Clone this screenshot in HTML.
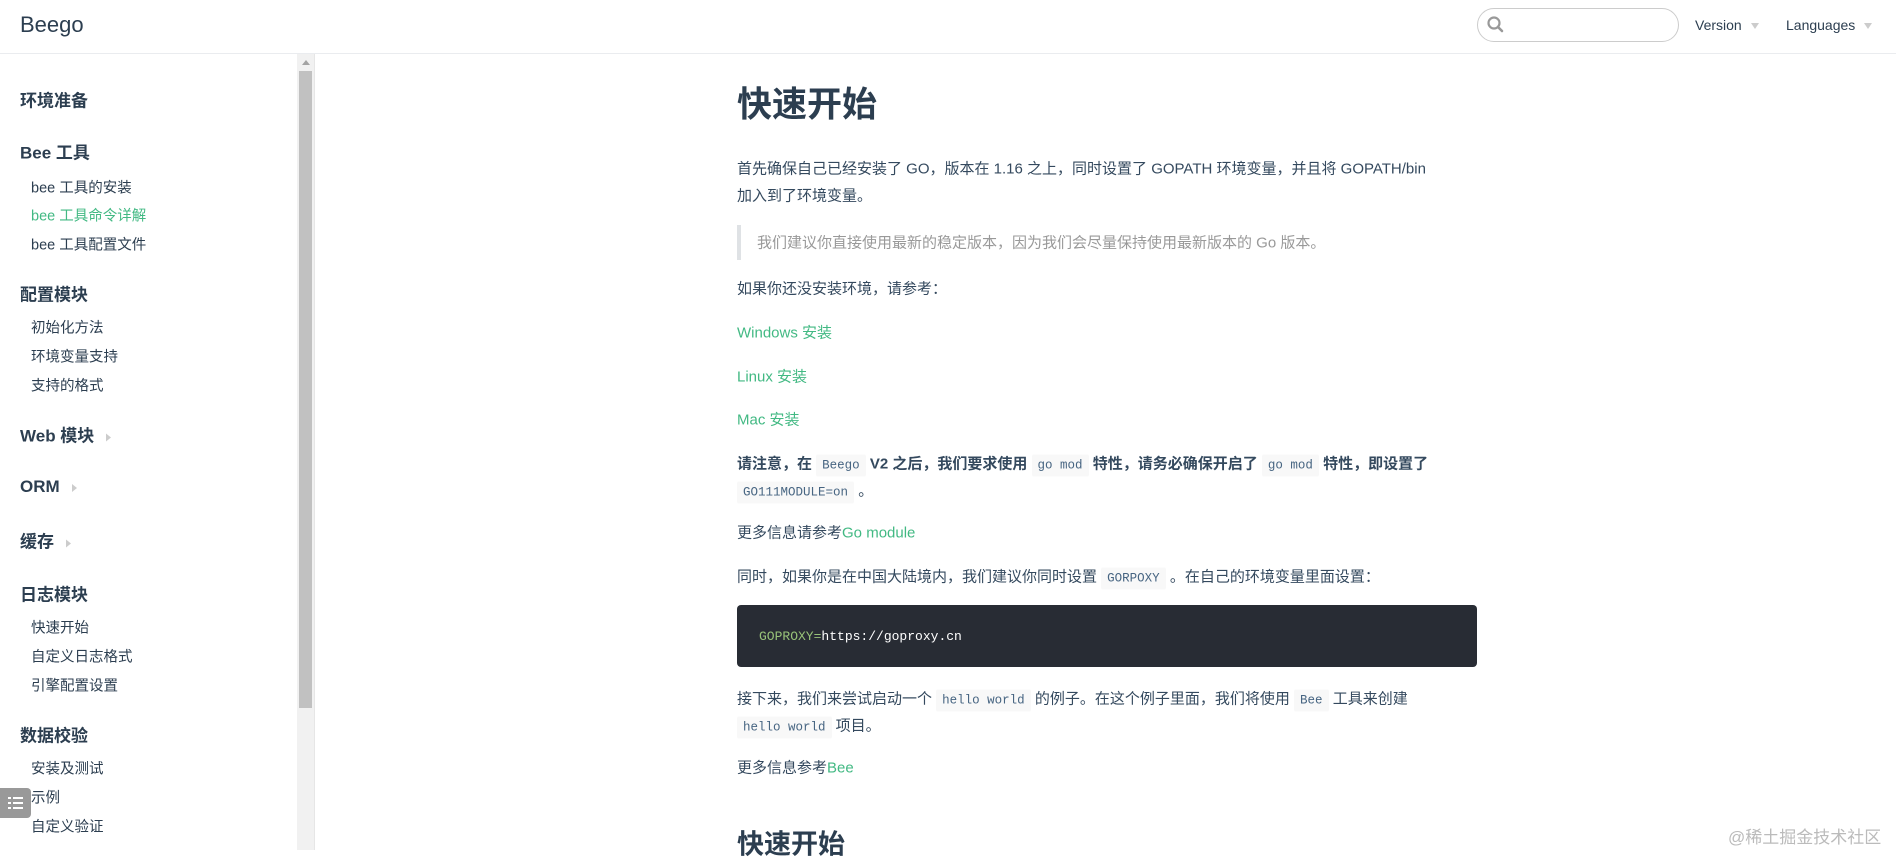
<!DOCTYPE html>
<html><head><meta charset="utf-8"><style>
*{margin:0;padding:0;box-sizing:border-box}
body{width:1896px;height:850px;overflow:hidden;background:#fff;font-family:"Liberation Sans","Noto Sans CJK SC",sans-serif;color:#34495e;position:relative}
.hdr{position:absolute;left:0;top:0;width:1896px;height:54px;border-bottom:1px solid #eaecef;background:#fff}
.logo{position:absolute;left:20px;top:12px;font-size:22px;color:#2c3e50}
.search{position:absolute;left:1477px;top:8px;width:202px;height:34px;border:1px solid #ccc;border-radius:17px}
.nav{position:absolute;top:17px;font-size:14px;color:#2c3e50}
.nav i{display:inline-block;width:0;height:0;border-left:4px solid transparent;border-right:4px solid transparent;border-top:6px solid #ccc;margin-left:9px;vertical-align:middle}
.side{position:absolute;left:0;top:54px;width:297px;height:796px}
.sb{position:absolute;left:297px;top:54px;width:18px;height:796px;background:#f1f1f1;border-right:1px solid #e6e6e6}
.thumb{position:absolute;left:2px;top:17px;width:13px;height:637px;background:#c1c1c1}
.up{position:absolute;left:5px;top:6px;border-left:4px solid transparent;border-right:4px solid transparent;border-bottom:5px solid #a3a3a3}
.h{position:absolute;left:20px;font-size:17px;font-weight:bold;color:#2c3e50;transform:translateY(-50%)}
.h .a{display:inline-block;border-top:4px solid transparent;border-bottom:4px solid transparent;border-left:5px solid #ccc;margin-left:12px;vertical-align:middle}
.s{position:absolute;left:31px;font-size:14.5px;color:#2c3e50;transform:translateY(-50%)}
.g{color:#42b983}
.c{position:absolute;left:737px;width:745px;font-size:15px;color:#34495e}
.c .l{position:absolute;left:0;white-space:nowrap;transform:translateY(-50%)}
code{font-family:"Liberation Mono",monospace;font-size:12.5px;background:#f8f8f8;color:#476582;padding:4px 6px;border-radius:2px;font-weight:normal}
.b{font-weight:bold}
.pre{position:absolute;left:737px;top:605px;width:740px;height:62px;background:#282c34;border-radius:4px;font-family:"Liberation Mono",monospace;font-size:13px;color:#fff;padding:24px 22px}
.toggle{position:absolute;left:0;top:788px;width:31px;height:30px;background:#999;border-radius:0 4px 4px 0}
.toggle span{position:absolute;left:8px;height:2px;background:#fff}
.wm{position:absolute;left:1728px;top:823px;font-size:17px;color:#bbb}
</style></head><body>
<div class="hdr">
<div class="logo">Beego</div>
<div class="search"><svg width="20" height="20" style="position:absolute;left:8px;top:6px" viewBox="0 0 20 20"><circle cx="8" cy="8" r="5.5" fill="none" stroke="#999" stroke-width="2.2"/><line x1="12" y1="12" x2="16" y2="16" stroke="#999" stroke-width="2.6" stroke-linecap="round"/></svg></div>
<div class="nav" style="left:1695px">Version<i></i></div>
<div class="nav" style="left:1786px">Languages<i></i></div>
</div>
<div class="side">
<div class="h" style="top:45px">环境准备</div>
<div class="h" style="top:97px">Bee 工具</div>
<div class="s" style="top:133px">bee 工具的安装</div>
<div class="s g" style="top:161px">bee 工具命令详解</div>
<div class="s" style="top:190px">bee 工具配置文件</div>
<div class="h" style="top:239px">配置模块</div>
<div class="s" style="top:273px">初始化方法</div>
<div class="s" style="top:302px">环境变量支持</div>
<div class="s" style="top:331px">支持的格式</div>
<div class="h" style="top:380px">Web 模块<span class="a"></span></div>
<div class="h" style="top:433px">ORM<span class="a"></span></div>
<div class="h" style="top:486px">缓存<span class="a"></span></div>
<div class="h" style="top:539px">日志模块</div>
<div class="s" style="top:573px">快速开始</div>
<div class="s" style="top:602px">自定义日志格式</div>
<div class="s" style="top:631px">引擎配置设置</div>
<div class="h" style="top:680px">数据校验</div>
<div class="s" style="top:714px">安装及测试</div>
<div class="s" style="top:743px">示例</div>
<div class="s" style="top:772px">自定义验证</div>
</div>
<div class="sb"><div class="up"></div><div class="thumb"></div></div>
<div class="toggle"><span style="top:9px;width:3px"></span><span style="top:9px;left:13px;width:10px"></span><span style="top:14px;width:3px"></span><span style="top:14px;left:13px;width:10px"></span><span style="top:19px;width:3px"></span><span style="top:19px;left:13px;width:10px"></span></div>
<div class="c">
<div class="l" style="top:102px;font-size:35px;font-weight:bold;color:#2c3e50">快速开始</div>
<div class="l" style="top:168px">首先确保自己已经安装了 GO，版本在 1.16 之上，同时设置了 GOPATH 环境变量，并且将 GOPATH/bin</div>
<div class="l" style="top:195px">加入到了环境变量。</div>
<div style="position:absolute;left:0;top:225px;width:4px;height:35px;background:#dfe2e5"></div>
<div class="l" style="top:242px;left:20px;color:#999">我们建议你直接使用最新的稳定版本，因为我们会尽量保持使用最新版本的 Go 版本。</div>
<div class="l" style="top:288px">如果你还没安装环境，请参考：</div>
<div class="l g" style="top:332px">Windows 安装</div>
<div class="l g" style="top:376px">Linux 安装</div>
<div class="l g" style="top:419px">Mac 安装</div>
<div class="l b" style="top:463px">请注意，在 <code>Beego</code> V2 之后，我们要求使用 <code>go mod</code> 特性，请务必确保开启了 <code>go mod</code> 特性，即设置了</div>
<div class="l" style="top:490px"><code>GO111MODULE=on</code> 。</div>
<div class="l" style="top:532px">更多信息请参考<span class="g">Go module</span></div>
<div class="l" style="top:576px">同时，如果你是在中国大陆境内，我们建议你同时设置 <code>GORPOXY</code> 。在自己的环境变量里面设置：</div>
<div class="l" style="top:698px">接下来，我们来尝试启动一个 <code>hello world</code> 的例子。在这个例子里面，我们将使用 <code>Bee</code> 工具来创建</div>
<div class="l" style="top:725px"><code>hello world</code> 项目。</div>
<div class="l" style="top:767px">更多信息参考<span class="g">Bee</span></div>
<div class="l" style="top:842px;font-size:27px;font-weight:bold;color:#2c3e50">快速开始</div>
</div>
<div class="pre"><span style="color:#98c379">GOPROXY=</span>https://goproxy.cn</div>
<div class="wm">@稀土掘金技术社区</div>
</body></html>
